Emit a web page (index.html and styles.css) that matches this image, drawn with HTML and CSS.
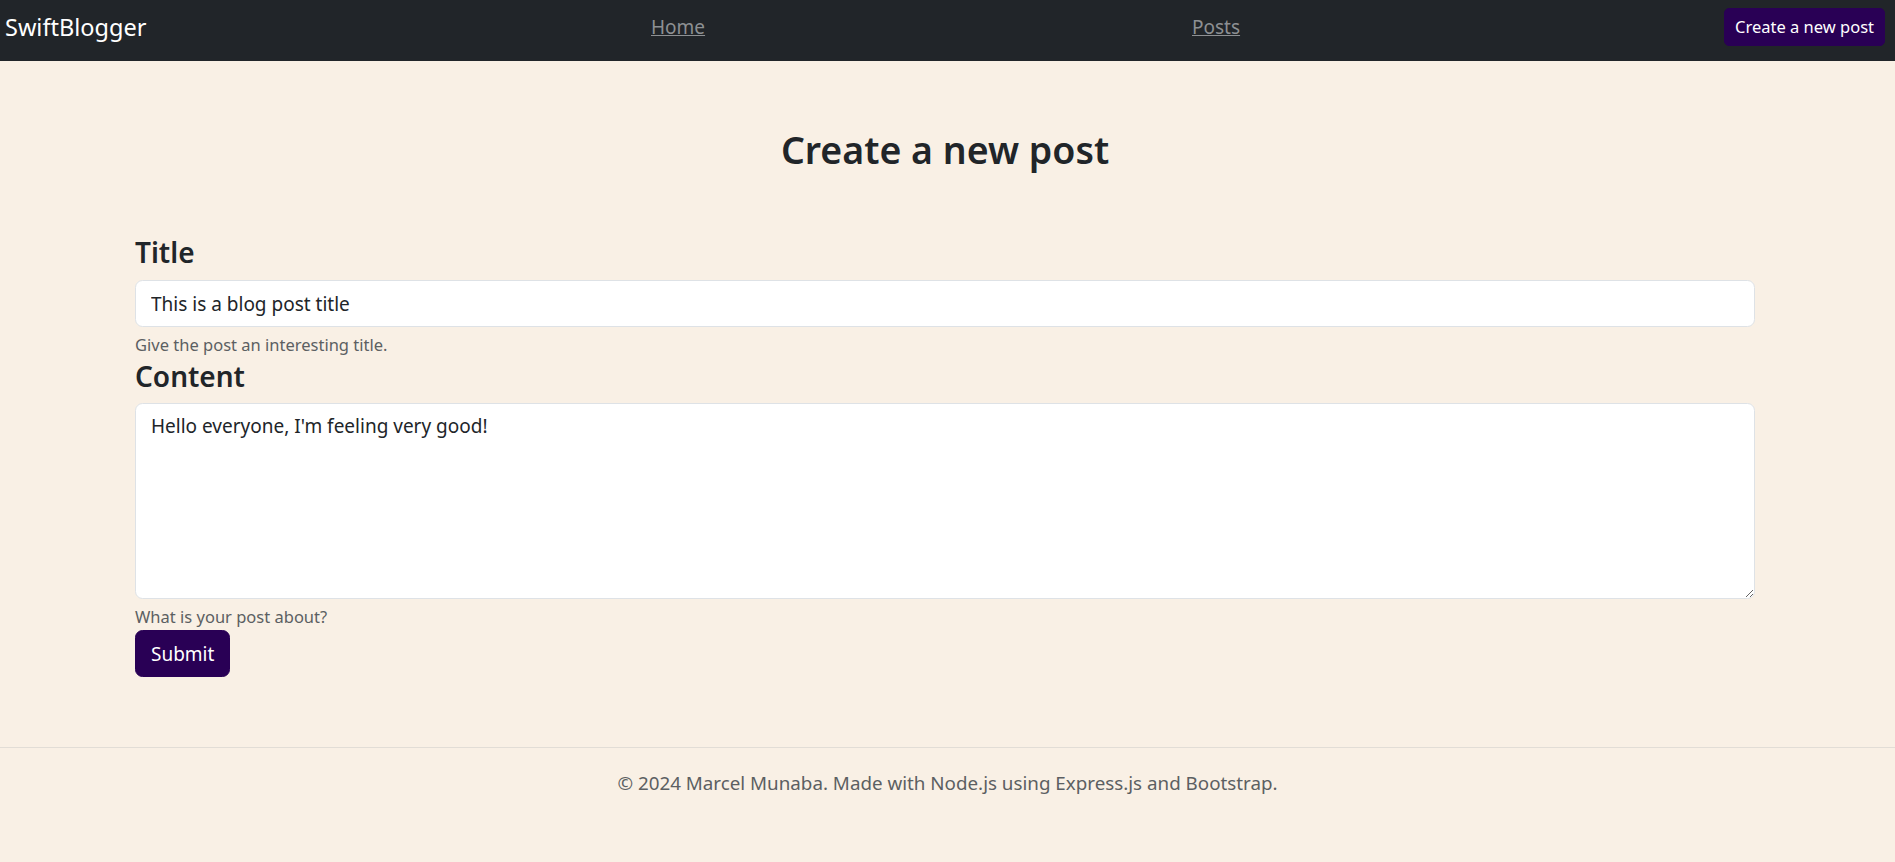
FILE: index.html
```html
<!DOCTYPE html>
<html lang="en">
<head>
<meta charset="utf-8">
<title>SwiftBlogger - Create a new post</title>
<link rel="stylesheet" href="styles.css">
</head>
<body>
<header class="navbar">
  <a class="brand" href="#">SwiftBlogger</a>
  <a class="nav-link" href="#">Home</a>
  <a class="nav-link" href="#">Posts</a>
  <a class="btn btn-sm" href="#">Create a new post</a>
</header>
<main class="main">
  <h2 class="page-title">Create a new post</h2>
  <form class="post-form">
    <label class="form-label" for="title">Title</label>
    <input class="form-control" id="title" type="text" value="This is a blog post title">
    <div class="form-text">Give the post an interesting title.</div>
    <label class="form-label" for="content">Content</label>
    <textarea class="form-control textarea" id="content">Hello everyone, I'm feeling very good!</textarea>
    <div class="form-text">What is your post about?</div>
    <button class="btn btn-submit" type="button">Submit</button>
  </form>
</main>
<footer class="footer">
  <p class="footer-text">© 2024 Marcel Munaba. Made with Node.js using Express.js and Bootstrap.</p>
</footer>
</body>
</html>
```

FILE: styles.css
```css
* { box-sizing: border-box; }
html, body { margin: 0; padding: 0; }
body {
  background: #f9f0e5;
  color: #212529;
  font-family: "Noto Sans", "Open Sans", sans-serif;
  font-size: 20px;
  line-height: 1.5;
  min-height: 862px;
}
.navbar {
  background: #212529;
  height: 61px;
  padding: 7px 10px 16px 5px;
  display: grid;
  grid-template-columns: 646px 541px 1fr auto;
  align-items: center;
}
.brand {
  color: #fff;
  text-decoration: none;
  font-size: 23.5px;
  line-height: 38px;
}
.nav-link {
  color: #8d9093;
  font-size: 19px;
  line-height: 38px;
  padding-top: 1px;
  justify-self: start;
}
.btn {
  display: inline-block;
  background: #290055;
  color: #fff;
  border: 1px solid #290055;
  text-decoration: none;
  font-family: inherit;
  cursor: pointer;
}
.btn-sm {
  font-size: 16.5px;
  line-height: 26px;
  padding: 5px 10px;
  border-radius: 5px;
}
.main {
  padding: 65px 140px 0 135px;
}
.page-title {
  margin: 0 0 60px;
  text-align: center;
  font-size: 37.5px;
  line-height: 48px;
  font-weight: 600;
}
.post-form {
  display: flex;
  flex-direction: column;
  align-items: stretch;
}
.form-label {
  display: block;
  font-size: 28px;
  line-height: 36px;
  font-weight: 600;
  margin-bottom: 10px;
}
.form-control {
  display: block;
  width: 100%;
  height: 47px;
  padding: 7px 15px;
  font-family: inherit;
  font-size: 19px;
  line-height: 30px;
  color: #212529;
  background: #fff;
  border: 1px solid #dee2e6;
  border-radius: 7.5px;
  outline: none;
}
.textarea {
  height: 196px;
  margin-top: -1px;
  resize: vertical;
}
.form-text {
  margin-top: 5px;
  font-size: 16.5px;
  line-height: 26px;
  color: #5c5f62;
}
.btn-submit {
  align-self: flex-start;
  font-size: 19px;
  line-height: 30px;
  padding: 7.5px 15px;
  border-radius: 7.5px;
  height: 47px;
}
.footer {
  margin-top: 70px;
  border-top: 1px solid #e2ddd6;
  padding: 20px 0;
}
.footer-text {
  margin: 0;
  text-align: center;
  font-size: 18.8px;
  line-height: 30px;
  color: #5c5f62;
}
```
